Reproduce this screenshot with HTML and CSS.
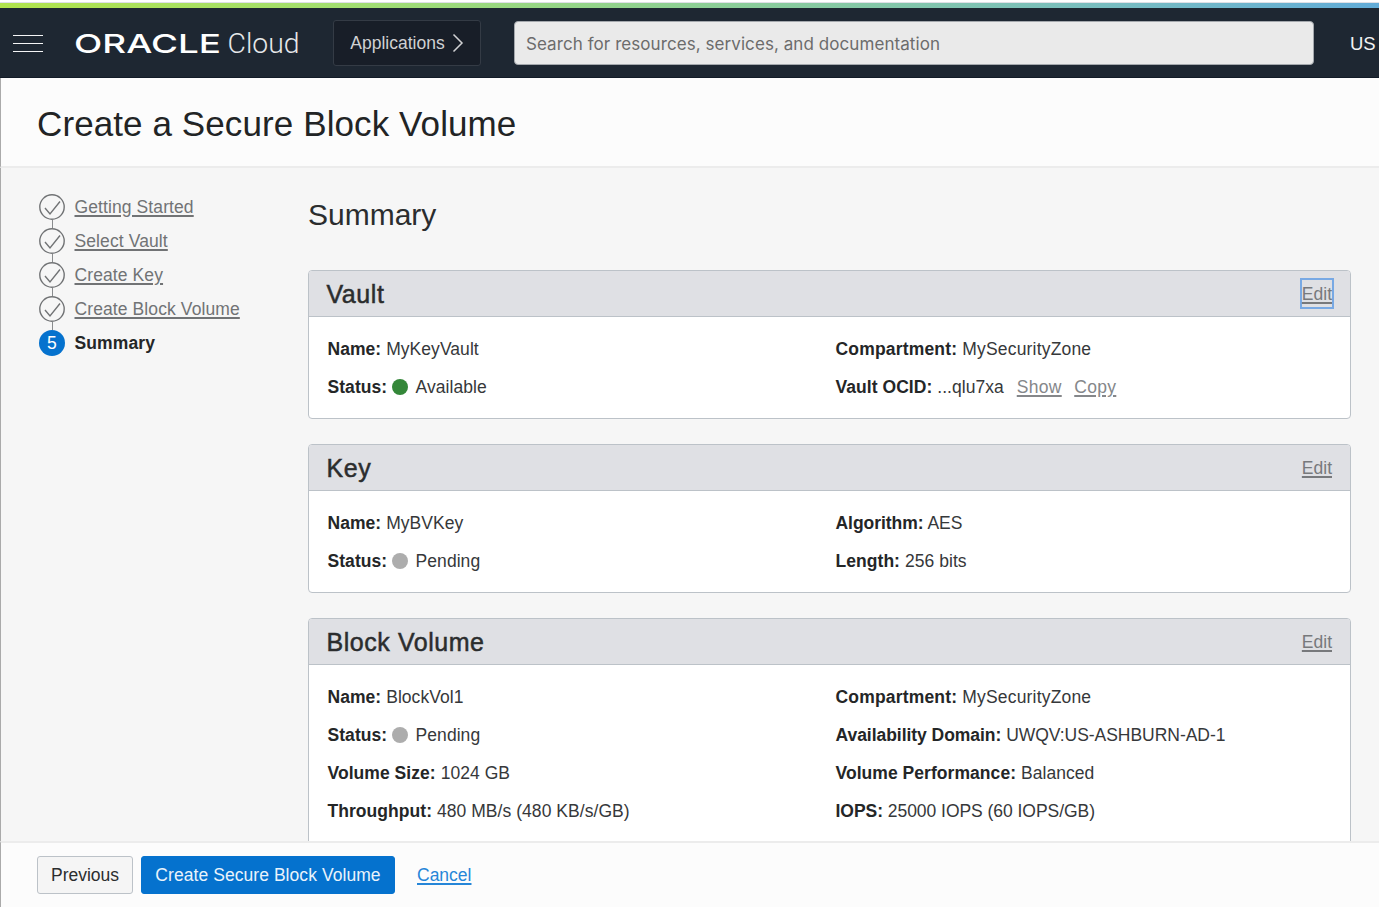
FILE: index.html
```html
<!DOCTYPE html>
<html lang="en">
<head>
<meta charset="utf-8">
<title>Create a Secure Block Volume</title>
<link rel="stylesheet" href="styles.css">
</head>
<body>
<div class="app">
  <div class="rainbow"></div>
  <header class="topbar">
    <button class="menu" aria-label="Menu"><span></span><span></span><span></span></button>
    <svg class="logo" width="226" height="40" viewBox="0 0 226 40">
      <text class="logo-oracle" x="-1" y="29.500" textLength="147" lengthAdjust="spacingAndGlyphs">ORACLE</text>
      <text class="logo-cloud" x="152.500" y="29.500" textLength="72" lengthAdjust="spacingAndGlyphs">Cloud</text>
    </svg>
    <button class="apps"><span>Applications</span><svg width="12" height="20" viewBox="0 0 12 20"><path d="M1.5 1.5 L10 10 L1.5 18.5"/></svg></button>
    <div class="search">Search for resources, services, and documentation</div>
    <span class="region">US</span>
  </header>
  <div class="titlebar"><h1>Create a Secure Block Volume</h1></div>
  <main class="content">
    <ol class="steps">
      <li><svg class="tick" viewBox="0 0 26 26"><circle cx="13" cy="13" r="12.2"/><path d="M6 14 L11 20 L21 7.500"/></svg><a>Getting Started</a></li>
      <li><svg class="tick" viewBox="0 0 26 26"><circle cx="13" cy="13" r="12.2"/><path d="M6 14 L11 20 L21 7.500"/></svg><a>Select Vault</a></li>
      <li><svg class="tick" viewBox="0 0 26 26"><circle cx="13" cy="13" r="12.2"/><path d="M6 14 L11 20 L21 7.500"/></svg><a>Create Key</a></li>
      <li><svg class="tick" viewBox="0 0 26 26"><circle cx="13" cy="13" r="12.2"/><path d="M6 14 L11 20 L21 7.500"/></svg><a>Create Block Volume</a></li>
      <li class="current"><span class="num">5</span><b>Summary</b></li>
    </ol>
    <section class="summary">
      <h2>Summary</h2>
      <article class="card">
        <div class="card-head"><h3>Vault</h3><a class="edit focused">Edit</a></div>
        <div class="card-body">
          <p><b>Name:</b> MyKeyVault</p><p class="roomy"><b>Compartment:</b> MySecurityZone</p>
          <p><b>Status:</b> <i class="dot green"></i>Available</p><p><b>Vault OCID:</b> ...qlu7xa <a class="act">Show</a><a class="act">Copy</a></p>
        </div>
      </article>
      <article class="card">
        <div class="card-head"><h3>Key</h3><a class="edit">Edit</a></div>
        <div class="card-body">
          <p><b>Name:</b> MyBVKey</p><p class="snug"><b>Algorithm:</b> AES</p>
          <p><b>Status:</b> <i class="dot"></i>Pending</p><p><b>Length:</b> 256 bits</p>
        </div>
      </article>
      <article class="card">
        <div class="card-head"><h3>Block Volume</h3><a class="edit">Edit</a></div>
        <div class="card-body">
          <p><b>Name:</b> BlockVol1</p><p class="roomy"><b>Compartment:</b> MySecurityZone</p>
          <p><b>Status:</b> <i class="dot"></i>Pending</p><p class="snug"><b>Availability Domain:</b> UWQV:US-ASHBURN-AD-1</p>
          <p><b>Volume Size:</b> 1024 GB</p><p><b>Volume Performance:</b> Balanced</p>
          <p><b>Throughput:</b> 480 MB/s (480 KB/s/GB)</p><p class="snug"><b>IOPS:</b> 25000 IOPS (60 IOPS/GB)</p>
        </div>
      </article>
    </section>
  </main>
  <footer class="actions">
    <button class="btn">Previous</button>
    <button class="btn primary">Create Secure Block Volume</button>
    <a class="cancel">Cancel</a>
  </footer>
</div>
</body>
</html>
```
FILE: styles.css
```css
* { box-sizing: border-box; }
body { margin: 0; background: #fff; font-family: "Liberation Sans", Arial, sans-serif; font-size: 17.5px; color: #36383a; overflow: hidden; }
h1, h2, h3, p, ol { margin: 0; padding: 0; font-weight: 400; }
button { font: inherit; margin: 0; padding: 0; }
a { text-decoration: underline; text-underline-offset: 2px; text-decoration-thickness: 1.5px; }
.app { width: 1379px; height: 907px; padding-top: 2px; display: flex; flex-direction: column; }
.rainbow { height: 6px; flex: none; border-top: 1px solid #dfe0e6; background: linear-gradient(90deg, #b0e34c, #a2de70 25%, #8dcf94 50%, #78bdc0 80%, #62acd8); }
.topbar { height: 70px; flex: none; background: #1e2732; display: flex; align-items: center; overflow: hidden; border-bottom: 1px solid #121b27; padding-top: 1px; }
.menu { width: 30px; height: 17px; margin-left: 13px; background: none; border: 0; display: flex; flex-direction: column; justify-content: space-between; flex: none; }
.menu span { height: 1px; background: #f4f5f6; }
.logo { margin-left: 32px; flex: none; overflow: visible; }
.logo-oracle { font: 500 26px Inter, sans-serif; fill: #fff; }
.logo-cloud { font: 300 28px Roboto, sans-serif; fill: #e6e8ea; }
.apps { width: 148px; height: 46px; margin-left: 32px; flex: none; background: #181e28; border: 1px solid #343b45; border-radius: 3px; color: #d0d1d3; display: flex; align-items: center; justify-content: center; gap: 7px; font-size: 17.5px; }
.apps svg { fill: none; stroke: #d0d1d3; stroke-width: 1.5; }
.search { width: 800px; height: 44px; margin-left: 33px; flex: none; background: #eaeaea; border: 1px solid #a4a8ad; border-radius: 4px; padding-left: 11px; line-height: 44px; font-family: Inter, sans-serif; font-size: 17px; letter-spacing: .07px; color: #6c6c6c; }
.region { margin-left: 36px; color: #f1f2f3; font-size: 18.5px; padding-top: 1px; }
.titlebar { height: 90px; flex: none; background: #fcfcfc; border-left: 1px solid #aaa; border-bottom: 2px solid #ececec; padding: 25px 0 0 36px; }
h1 { font-size: 35px; line-height: 42px; letter-spacing: .1px; color: #222425; }
.content { flex: 1; min-height: 0; overflow: hidden; background: #f6f6f6; border-left: 1px solid #aaa; display: flex; }
.steps { list-style: none; width: 307px; flex: none; padding: 26px 0 0 38px; color: #717375; letter-spacing: .1px; }
.steps li { display: flex; height: 34px; align-items: flex-start; gap: 9.5px; line-height: 27px; background: linear-gradient(#8a8c8e, #8a8c8e) 13px 26px / 1px 8px no-repeat; }
.steps .current { color: #1f2122; background: none; }
.tick { width: 26px; height: 26px; fill: none; stroke: #717375; stroke-width: 1.4; }
.num { width: 26px; height: 26px; border-radius: 50%; background: #0572ce; color: #fff; text-align: center; }
.summary { width: 1043px; padding-top: 28px; }
h2 { font-size: 30px; line-height: 38px; margin-bottom: 36px; color: #2b2d2e; }
.card { border: 1px solid #bcc2c8; border-radius: 4px; background: #fff; margin-bottom: 25px; overflow: hidden; height: 149px; }
.card:last-child { height: 270px; }
.card-head { height: 46px; background: #dfe0e4; border-bottom: 1px solid #bcc2c8; display: flex; justify-content: space-between; align-items: center; padding: 0 16px 0 17.5px; }
h3 { font-size: 25px; -webkit-text-stroke: .5px; letter-spacing: .55px; color: #2b2d2e; padding-top: 2px; }
.edit { color: #77797c; padding: 4px 0 2px; border: 2px solid transparent; }
.focused { border-color: #78a9e4; }
.card-body { display: grid; grid-template-columns: 508px 1fr; grid-auto-rows: 38px; padding: 13px 0 0 18.5px; line-height: 38px; }
.card-body p { white-space: nowrap; letter-spacing: .05px; }
.card-body .roomy { letter-spacing: .18px; }
.card-body .snug { letter-spacing: -.04px; }
b { font-weight: 700; color: #242627; }
.dot { display: inline-block; width: 16px; height: 16px; border-radius: 50%; background: #adadad; margin-right: 7.5px; vertical-align: -2px; }
.green { background: #348739; }
.act { color: #85878a; margin: 0 4.5px 0 8px; letter-spacing: .3px; }
.actions { height: 66px; flex: none; background: #fcfcfc; border-left: 1px solid #aaa; border-top: 2px solid #ececec; display: flex; align-items: center; padding: 0 0 0 36px; }
.btn { height: 38px; border: 1px solid #bcc2c8; border-radius: 3px; background: #f5f5f5; color: #2b2d2e; width: 96px; white-space: nowrap; }
.primary { background: #0572ce; border-color: #0572ce; color: #eaf3fb; width: 254px; margin-left: 8px; letter-spacing: .06px; }
.cancel { color: #2686d8; margin-left: 22px; }
```
